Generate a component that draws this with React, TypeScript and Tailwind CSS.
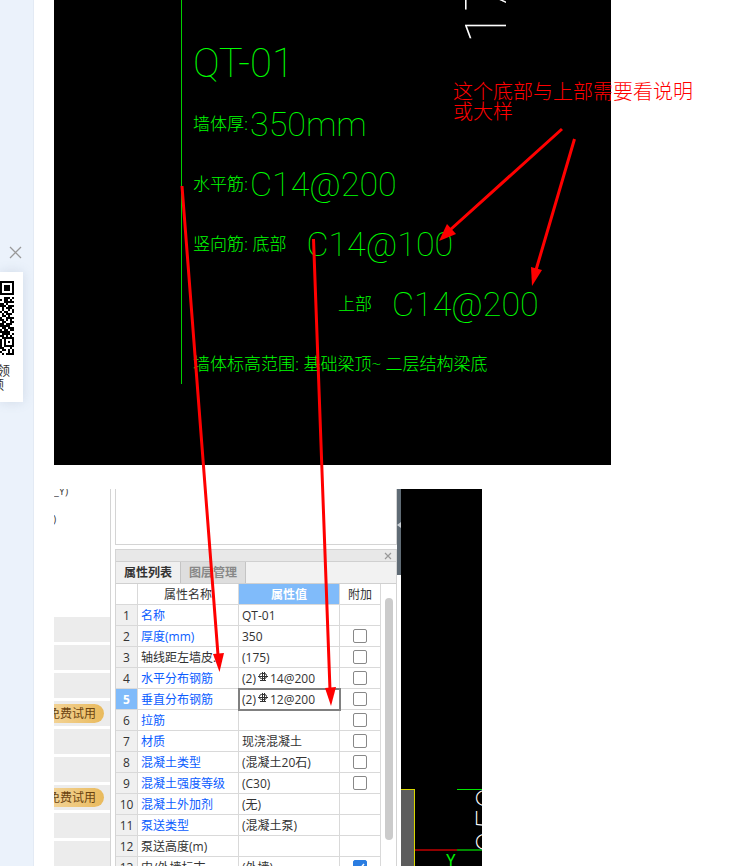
import React, { useState } from 'react';

interface PropertyRow {
  name: string;
  value: string;
  rebar?: boolean;
  link?: boolean;
  extra?: 'off' | 'on';
}

const PROPERTIES: PropertyRow[] = [
  { name: '名称', value: 'QT-01', link: true },
  { name: '厚度(mm)', value: '350', link: true, extra: 'off' },
  { name: '轴线距左墙皮...', value: '(175)', extra: 'off' },
  { name: '水平分布钢筋', value: '14@200', rebar: true, link: true, extra: 'off' },
  { name: '垂直分布钢筋', value: '12@200', rebar: true, link: true, extra: 'off' },
  { name: '拉筋', value: '', link: true, extra: 'off' },
  { name: '材质', value: '现浇混凝土', link: true, extra: 'off' },
  { name: '混凝土类型', value: '(混凝土20石)', link: true, extra: 'off' },
  { name: '混凝土强度等级', value: '(C30)', link: true, extra: 'off' },
  { name: '混凝土外加剂', value: '(无)', link: true },
  { name: '泵送类型', value: '(混凝土泵)', link: true },
  { name: '泵送高度(m)', value: '' },
  { name: '内/外墙标志', value: '(外墙)', extra: 'on' },
];

// true = row carries the trial badge
const MODULE_ROWS = [false, false, false, true, false, false, true, false, false];

const QR_ROWS = [
  '1111111', '1000001', '1011101', '1011101', '1011101', '1000001', '1111111',
  '0000000', '0011101', '1011010', '0011111', '1101000', '1110111', '0101110',
  '0100101', '1011001', '0101110', '0110100', '1001111', '1101010', '0110011',
  '1101110', '1111100', '0110111', '1011011', '1111100', '0111101', '1101010',
  '0111111', '1010001', '1010101', '1010001', '1011111', '1100010', '0110101',
  '1000101', '0101111',
];

const SELECTED = 4;

const RebarSymbol = () => (
  <svg className="mx-[2px] inline-block -translate-y-[3px]" width="10" height="10" viewBox="0 0 10 10" fill="none" stroke="#333" strokeWidth="1">
    <rect x="1.500" y="1.500" width="7" height="5" rx="2" />
    <path d="M4.500 0v8.500M6.500 0v8.500M0 4.500h10M2 8.500h6" />
  </svg>
);

const SidePromo = () => (
  <aside className="w-[34px] shrink-0 overflow-hidden border-r border-[#e3eaf4] bg-[#ebf2fb] pt-[246px]">
    <button aria-label="关闭" className="ml-[9px] block">
      <svg width="13" height="13" viewBox="0 0 13 13" stroke="#999" strokeWidth="1.3">
        <path d="M1 1l11 11M12 1L1 12" />
      </svg>
    </button>
    <div className="mt-[13px] h-[130px] w-[23px] overflow-hidden bg-white pt-[9px] shadow-[0_0_12px_rgba(100,120,150,0.2)]">
      <svg width="14" height="74" viewBox="0 0 7 37" shapeRendering="crispEdges">
        {QR_ROWS.map((row, y) =>
          row.split('').map((bit, x) => bit === '1' && <rect key={`${x}-${y}`} x={x} y={y} width="1" height="1" />)
        )}
      </svg>
      <p className="-ml-[3px] mt-2 text-[13px] leading-[14px] text-[#333]">领</p>
      <p className="-ml-[9px] text-[13px] leading-[14px] text-[#333]">额</p>
    </div>
  </aside>
);

const Label: React.FC<{ children: React.ReactNode }> = ({ children }) => (
  <span className="text-[17px] font-light">{children}</span>
);

const Spec: React.FC<{ children: React.ReactNode }> = ({ children }) => (
  <span className="font-[Roboto] text-[34px] font-thin">{children}</span>
);

const DrawingNotes = () => (
  <div className="relative h-[465px] w-full max-w-[557px] overflow-hidden bg-black">
    <div className="ml-[127px] h-96 whitespace-nowrap border-l border-l-[#00d000] pl-[11px] pt-[34px] text-[#00ff00] [&>div]:flex [&>div]:h-[60px] [&>div]:items-center">
      <div className="font-[Roboto] text-[40px] font-thin">QT-01</div>
      <div className="gap-[2px]"><Label>墙体厚:</Label><Spec>350mm</Spec></div>
      <div className="gap-[2px]"><Label>水平筋:</Label><Spec>C14@200</Spec></div>
      <div className="gap-5"><Label>竖向筋: 底部</Label><Spec>C14@100</Spec></div>
      <div className="gap-5 pl-[145px]"><Label>上部</Label><Spec>C14@200</Spec></div>
      <div><Label>墙体标高范围: 基础梁顶~ 二层结构梁底</Label></div>
    </div>
    <span className="absolute left-[404px] -top-5 font-[Roboto] text-[58px] font-thin leading-[56px] text-white [writing-mode:sideways-lr]">17</span>
  </div>
);

const ModuleList = () => (
  <div className="w-[57px] shrink-0 overflow-hidden border-r border-[#d4d4d4] text-[11px] text-[#444]">
    <div className="flow-root h-32 leading-[28px]">
      <p className="-mt-3">_Y)</p>
      <p className="-ml-px">)</p>
    </div>
    <ul className="flex flex-col gap-[3px]">
      {MODULE_ROWS.map((trial, i) => (
        <li key={i} className="flex h-[25px] items-center bg-[#ececec]">
          {trial && (
            <span className="-ml-[15px] flex h-[19px] items-center whitespace-nowrap rounded-full bg-gradient-to-r from-[#f5d9a2] to-[#e9ba5c] pl-[9px] pr-2 text-[12px] text-[#6b4310]">
              免费试用
            </span>
          )}
        </li>
      ))}
    </ul>
  </div>
);

const PropertyTable = () => (
  <table className="w-[265px] table-fixed border-separate border-spacing-0 text-[12px] leading-[18px] text-[#333] [&_td]:h-[21px] [&_td]:whitespace-nowrap [&_td]:border-b [&_td]:border-r [&_td]:border-[#d9d9d9] [&_th]:h-[21px] [&_th]:border-b [&_th]:border-r [&_th]:border-[#d9d9d9] [&_th]:pt-[2px] [&_th]:font-normal">
    <colgroup>
      <col className="w-[22px]" />
      <col className="w-[101px]" />
      <col className="w-[101px]" />
      <col className="w-[41px]" />
    </colgroup>
    <thead>
      <tr>
        <th />
        <th>属性名称</th>
        <th className="bg-[#80bbfa] text-white"><span className="font-bold">属性值</span></th>
        <th>附加</th>
      </tr>
    </thead>
    <tbody>
      {PROPERTIES.map((row, i) => (
        <tr key={row.name}>
          <td className={`pt-[2px] text-center ${i === SELECTED ? 'bg-[#80bbfa] font-bold text-white' : 'bg-[#f0f0f0]'}`}>{i + 1}</td>
          <td className={`overflow-hidden pl-[3px] pt-[2px] ${row.link ? 'text-[#0a5cff]' : ''}`}>{row.name}</td>
          <td className={`pl-[3px] pt-[2px] ${i === SELECTED ? 'outline-2 -outline-offset-1 outline-[#808080]' : ''}`}>
            {row.rebar && <>(2)<RebarSymbol /></>}
            {row.value}
          </td>
          <td>
            {row.extra && (
              <label className="relative mx-auto block size-[14px]">
                <input
                  type="checkbox"
                  aria-label={`${row.name} 附加`}
                  defaultChecked={row.extra === 'on'}
                  className="peer block size-[14px] appearance-none rounded-[2px] border border-[#888] bg-white checked:border-[#2b7de1] checked:bg-[#2b7de1]"
                />
                <svg className="pointer-events-none absolute inset-0 hidden peer-checked:block" viewBox="0 0 14 14" fill="none" stroke="#fff" strokeWidth="1.5">
                  <path d="M3 7l3 3 5-6" />
                </svg>
              </label>
            )}
          </td>
        </tr>
      ))}
    </tbody>
  </table>
);

const PropertyPanel = () => {
  const [tab, setTab] = useState('属性列表');

  return (
    <div className="w-[286px] shrink-0 pl-1">
      <div className="h-14 border-x border-b border-[#d4d4d4]" />
      <div className="mt-1 border-x border-t border-[#d4d4d4]">
        <div className="flex h-3 items-center justify-end border-b border-[#d0d0d0] bg-[#e8e8e8] pr-1">
          <button aria-label="关闭面板">
            <svg width="8" height="8" viewBox="0 0 8 8" stroke="#999" strokeWidth="1.2"><path d="M1 1l6 6M7 1L1 7" /></svg>
          </button>
        </div>
        <div className="flex h-[22px] border-b border-[#d0d0d0] bg-[#f2f2f2] text-[12px] font-bold">
          {['属性列表', '图层管理'].map(name => (
            <button
              key={name}
              onClick={() => setTab(name)}
              className={`w-[65px] border-r border-[#c4c4c4] ${tab === name ? 'bg-[#f0f0f0] text-[#333]' : 'bg-[#dedede] text-[#888]'}`}
            >
              {name}
            </button>
          ))}
        </div>
        <div className="flex">
          <PropertyTable />
          <div className="ml-1 mt-[14px] h-[242px] w-2 rounded-full bg-[#cbcbcb]" />
        </div>
      </div>
    </div>
  );
};

const ModelView = () => (
  <div className="relative w-[81px] shrink-0 overflow-hidden bg-black">
    <svg className="block" width="81" height="400" viewBox="0 0 81 400" fill="none" shapeRendering="crispEdges">
      <rect x="0" y="301" width="13" height="99" fill="#5c5c5c" />
      <path d="M0 300.5h13.5V400" stroke="#d8d800" />
      <path d="M56 300.5h25" stroke="#00e600" />
      <path d="M14 361h42" stroke="#900000" strokeWidth="2" />
      <path d="M56 361h25" stroke="#008a00" strokeWidth="2" />
    </svg>
    <span className="absolute left-[45px] top-[362px] font-[Roboto] text-[16px] leading-5 text-[#00f000]">Y</span>
    <span className="absolute left-[67px] top-[298px] font-[Roboto] text-[40px] font-thin leading-[48px] text-white [writing-mode:sideways-lr]">050</span>
  </div>
);

const Arrows = () => (
  <svg className="pointer-events-none absolute left-0 top-0" width="751" height="866" viewBox="0 0 751 866" stroke="#f00" strokeWidth="3" fill="none">
    <path d="M182 186L218 655M313.500 239L330 690M562 129L450 230M574.500 139L536 270" />
    <g fill="#f00" stroke="none">
      <path d="M213 654l11-1-4.500 19z" />
      <path d="M325 688l11-1-5 19z" />
      <path d="M447 224l9 10-17 7z" />
      <path d="M531 267l11 3-10 16z" />
    </g>
  </svg>
);

export default function App() {
  return (
    <div className="relative flex h-screen overflow-hidden bg-white font-['Open_Sans','Noto_Sans_CJK_SC',sans-serif]">
      <SidePromo />
      <main className="min-w-0 flex-1 pl-5">
        <DrawingNotes />
        <div className="mt-6 flex">
          <ModuleList />
          <PropertyPanel />
          <div className="w-1 shrink-0">
            <div className="flex h-[86px] items-start bg-[#5f6b75] pt-[33px]">
              <svg width="4" height="6" viewBox="0 0 4 6" fill="#c8ced4"><path d="M4 0v6L0 3z" /></svg>
            </div>
          </div>
          <ModelView />
        </div>
      </main>
      <p className="absolute left-[453px] top-[82px] w-60 text-[20px] font-light leading-5 text-[#f00]">这个底部与上部需要看说明或大样</p>
      <Arrows />
    </div>
  );
}
